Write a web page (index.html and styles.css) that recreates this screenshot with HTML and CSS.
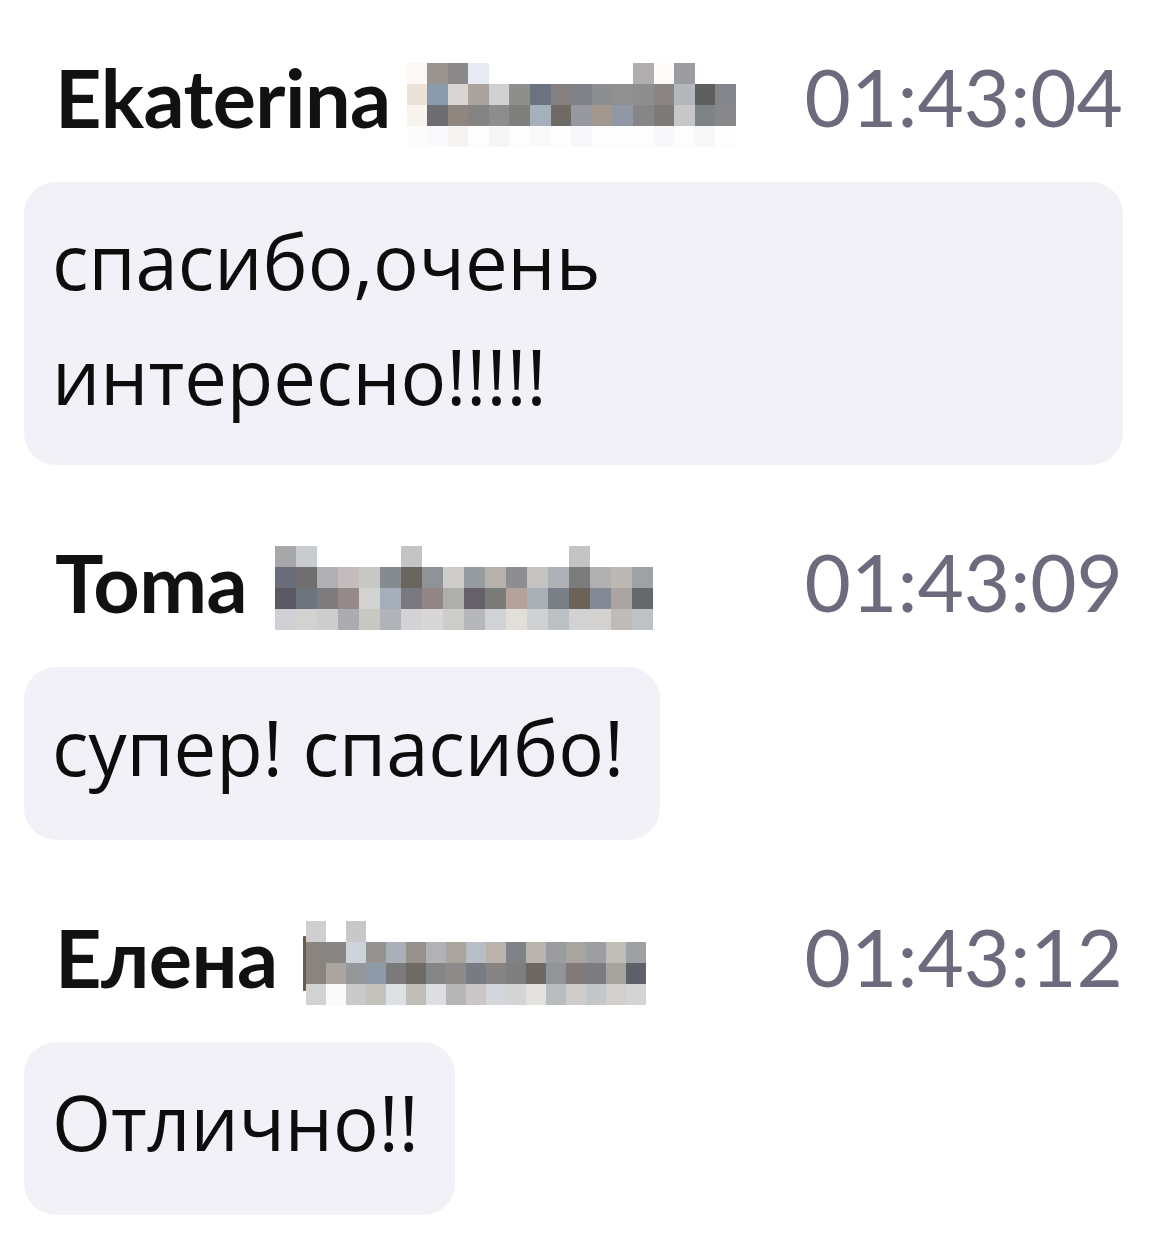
FILE: index.html
```html
<!DOCTYPE html>
<html lang="ru">
<head>
<meta charset="utf-8">
<title>Chat</title>
<link rel="stylesheet" href="styles.css">
</head>
<body>
<div class="chat">
  <div class="msg">
    <div class="head">
      <div class="who">
        <span class="name">Ekaterina</span>
        <div class="mosaic m16 tight">
          <i style="background:#fbf8f6"></i><i style="background:#9a9490"></i><i style="background:#8a8888"></i><i style="background:#e8ecf2"></i><i></i><i></i><i></i><i></i><i></i><i></i><i></i><i style="background:#b0aeaf"></i><i style="background:#fdfbf9"></i><i style="background:#9a9ca0"></i><i></i><i></i>
          <i style="background:#ebe2d8"></i><i style="background:#8c9aad"></i><i style="background:#d8d5d2"></i><i style="background:#aaa39c"></i><i style="background:#d0d1d2"></i><i style="background:#8e8e8c"></i><i style="background:#6b7280"></i><i style="background:#85817e"></i><i style="background:#7e8286"></i><i style="background:#8d8e92"></i><i style="background:#939090"></i><i style="background:#8f8e8e"></i><i style="background:#8a8582"></i><i style="background:#b4b7bc"></i><i style="background:#5f5f5f"></i><i style="background:#82868a"></i>
          <i style="background:#f7f3ee"></i><i style="background:#6e6e72"></i><i style="background:#8f8680"></i><i style="background:#838381"></i><i style="background:#8c8d8e"></i><i style="background:#7f7f7d"></i><i style="background:#a4b0bc"></i><i style="background:#6e6a66"></i><i style="background:#969aa0"></i><i style="background:#a39890"></i><i style="background:#8f98a4"></i><i style="background:#868686"></i><i style="background:#7d7a78"></i><i style="background:#c7c7c9"></i><i style="background:#7d8286"></i><i style="background:#88888a"></i>
          <i style="background:#fdfcfc"></i><i style="background:#fafafc"></i><i style="background:#f6f4f2"></i><i style="background:#fdfdfd"></i><i style="background:#f6f6f8"></i><i style="background:#fdfdfd"></i><i style="background:#f8f9fb"></i><i style="background:#fdfdfd"></i><i style="background:#f8f8fa"></i><i style="background:#fdfdfd"></i><i style="background:#fdfdfd"></i><i style="background:#fdfdfd"></i><i style="background:#f8f8fa"></i><i style="background:#fdfdfd"></i><i style="background:#f8f8fa"></i><i style="background:#fdfdfd"></i>
        </div>
      </div>
      <span class="time">01:43:04</span>
    </div>
    <div class="bubble">спасибо,очень<br>интересно!!!!!</div>
  </div>

  <div class="msg">
    <div class="head">
      <div class="who">
        <span class="name">Toma</span>
        <div class="mosaic m18">
          <i style="background:#a8a8aa"></i><i style="background:#c8ccd0"></i><i></i><i></i><i></i><i></i><i style="background:#c4c4c4"></i><i></i><i></i><i></i><i></i><i></i><i></i><i></i><i style="background:#c4c4c4"></i><i></i><i></i><i></i>
          <i style="background:#6b6e7a"></i><i style="background:#716e70"></i><i style="background:#b0afb4"></i><i style="background:#c5bbbd"></i><i style="background:#c8c8c6"></i><i style="background:#868b90"></i><i style="background:#6b6560"></i><i style="background:#8f9398"></i><i style="background:#cfcdca"></i><i style="background:#979ca1"></i><i style="background:#b6b1aa"></i><i style="background:#8e8e92"></i><i style="background:#c5c3c1"></i><i style="background:#aeb2b6"></i><i style="background:#7c7c7c"></i><i style="background:#b0b0b0"></i><i style="background:#bdb8b4"></i><i style="background:#9ea2a6"></i>
          <i style="background:#5c5862"></i><i style="background:#6c737c"></i><i style="background:#7e7b7c"></i><i style="background:#958989"></i><i style="background:#d3d3d1"></i><i style="background:#a6afb9"></i><i style="background:#7a7880"></i><i style="background:#928689"></i><i style="background:#aeaeac"></i><i style="background:#66606a"></i><i style="background:#7a7a78"></i><i style="background:#b3a39a"></i><i style="background:#a9afb2"></i><i style="background:#7a7f87"></i><i style="background:#6d6258"></i><i style="background:#838a96"></i><i style="background:#aaa5a2"></i><i style="background:#65686d"></i>
          <i style="background:#cfd0d4"></i><i style="background:#d4d2d0"></i><i style="background:#cdcdcd"></i><i style="background:#acacb0"></i><i style="background:#c9c7c2"></i><i style="background:#b0b4b8"></i><i style="background:#d3d3d7"></i><i style="background:#d8d6d6"></i><i style="background:#ccccc8"></i><i style="background:#b6b7bb"></i><i style="background:#d1d2d6"></i><i style="background:#e2deda"></i><i style="background:#cfd1d2"></i><i style="background:#bac0c4"></i><i style="background:#d2d2d4"></i><i style="background:#d4d2d0"></i><i style="background:#bfbbb8"></i><i style="background:#bec1c5"></i>
        </div>
      </div>
      <span class="time">01:43:09</span>
    </div>
    <div class="bubble">супер! спасибо!</div>
  </div>

  <div class="msg">
    <div class="head">
      <div class="who">
        <span class="name">Елена</span>
        <div class="mosaic m17 edge">
          <i style="background:#cfcfcf"></i><i></i><i style="background:#c8c8c8"></i><i></i><i></i><i></i><i></i><i></i><i></i><i></i><i></i><i></i><i></i><i></i><i></i><i></i><i></i>
          <i style="background:#8a847f"></i><i style="background:#878682"></i><i style="background:#ccd3da"></i><i style="background:#959290"></i><i style="background:#aab0b8"></i><i style="background:#97918c"></i><i style="background:#b0b2b5"></i><i style="background:#a9a49e"></i><i style="background:#b8bec6"></i><i style="background:#b9b3ab"></i><i style="background:#7f8387"></i><i style="background:#bab4ae"></i><i style="background:#9a9c9f"></i><i style="background:#a8a49e"></i><i style="background:#9c9ea2"></i><i style="background:#c0bcb6"></i><i style="background:#9ea1a4"></i>
          <i style="background:#8a847f"></i><i style="background:#aaa59f"></i><i style="background:#96979a"></i><i style="background:#8e9aa8"></i><i style="background:#7a7a7a"></i><i style="background:#6e6a66"></i><i style="background:#838587"></i><i style="background:#8e8c8b"></i><i style="background:#767b84"></i><i style="background:#868483"></i><i style="background:#7e7e7e"></i><i style="background:#6c6762"></i><i style="background:#929598"></i><i style="background:#807a78"></i><i style="background:#7b7c80"></i><i style="background:#a7a39f"></i><i style="background:#5e6168"></i>
          <i style="background:#d2d2d2"></i><i style="background:#fafafa"></i><i style="background:#cacaca"></i><i style="background:#c4c2bd"></i><i style="background:#dde0e4"></i><i style="background:#c0bcb6"></i><i style="background:#dcdee1"></i><i style="background:#b6b6b6"></i><i style="background:#cac7c6"></i><i style="background:#d3d6da"></i><i style="background:#d4d4d4"></i><i style="background:#e3e1de"></i><i style="background:#b9bdc0"></i><i style="background:#d0cccb"></i><i style="background:#c3c7ca"></i><i style="background:#d2cfcc"></i><i style="background:#d3d4d6"></i>
        </div>
      </div>
      <span class="time">01:43:12</span>
    </div>
    <div class="bubble">Отлично!!</div>
  </div>
</div>
</body>
</html>
```

FILE: styles.css
```css
html, body {
  margin: 0;
  padding: 0;
  background: #ffffff;
}

.chat {
  padding: 48px 33px 0 24px;
  display: flex;
  flex-direction: column;
  gap: 68px;
}

.msg {
  display: flex;
  flex-direction: column;
  align-items: flex-start;
  gap: 37px;
}

.head {
  align-self: stretch;
  display: flex;
  justify-content: space-between;
  align-items: center;
  padding-left: 31px;
  height: 97px;
}

.who {
  display: flex;
  align-items: center;
  gap: 28px;
}

.name {
  font-family: Lato, "Liberation Sans", sans-serif;
  font-weight: 700;
  font-size: 81px;
  line-height: 97px;
  color: #111111;
  letter-spacing: -0.6px;
}

.time {
  font-family: Lato, "Liberation Sans", sans-serif;
  font-weight: 400;
  font-size: 80px;
  line-height: 97px;
  color: #6b6b7d;
}

.mosaic {
  display: grid;
  grid-auto-rows: 21px;
  margin-top: 12px;
}

.mosaic.tight {
  margin-left: -12px;
  margin-top: 16px;
}

.mosaic i {
  display: block;
  background: #ffffff;
}

.m16 { grid-template-columns: repeat(16, 20.6px); }
.m18 { grid-template-columns: repeat(18, 21px); }
.m17 { grid-template-columns: repeat(17, 20px); }

.edge {
  position: relative;
}

.edge::before {
  content: "";
  position: absolute;
  left: -3px;
  top: 15px;
  width: 3px;
  height: 55px;
  background: #6a5a4c;
  border-radius: 1px;
}

.bubble {
  background: #f2f1f7;
  border-radius: 32px;
  padding: 22px 36px 36px 28px;
  font-family: "Open Sans", "Noto Sans", sans-serif;
  font-size: 76px;
  line-height: 115px;
  color: #0d0d0d;
}

.msg:first-child .bubble {
  align-self: stretch;
  padding-top: 21px;
  padding-bottom: 32px;
}
```
